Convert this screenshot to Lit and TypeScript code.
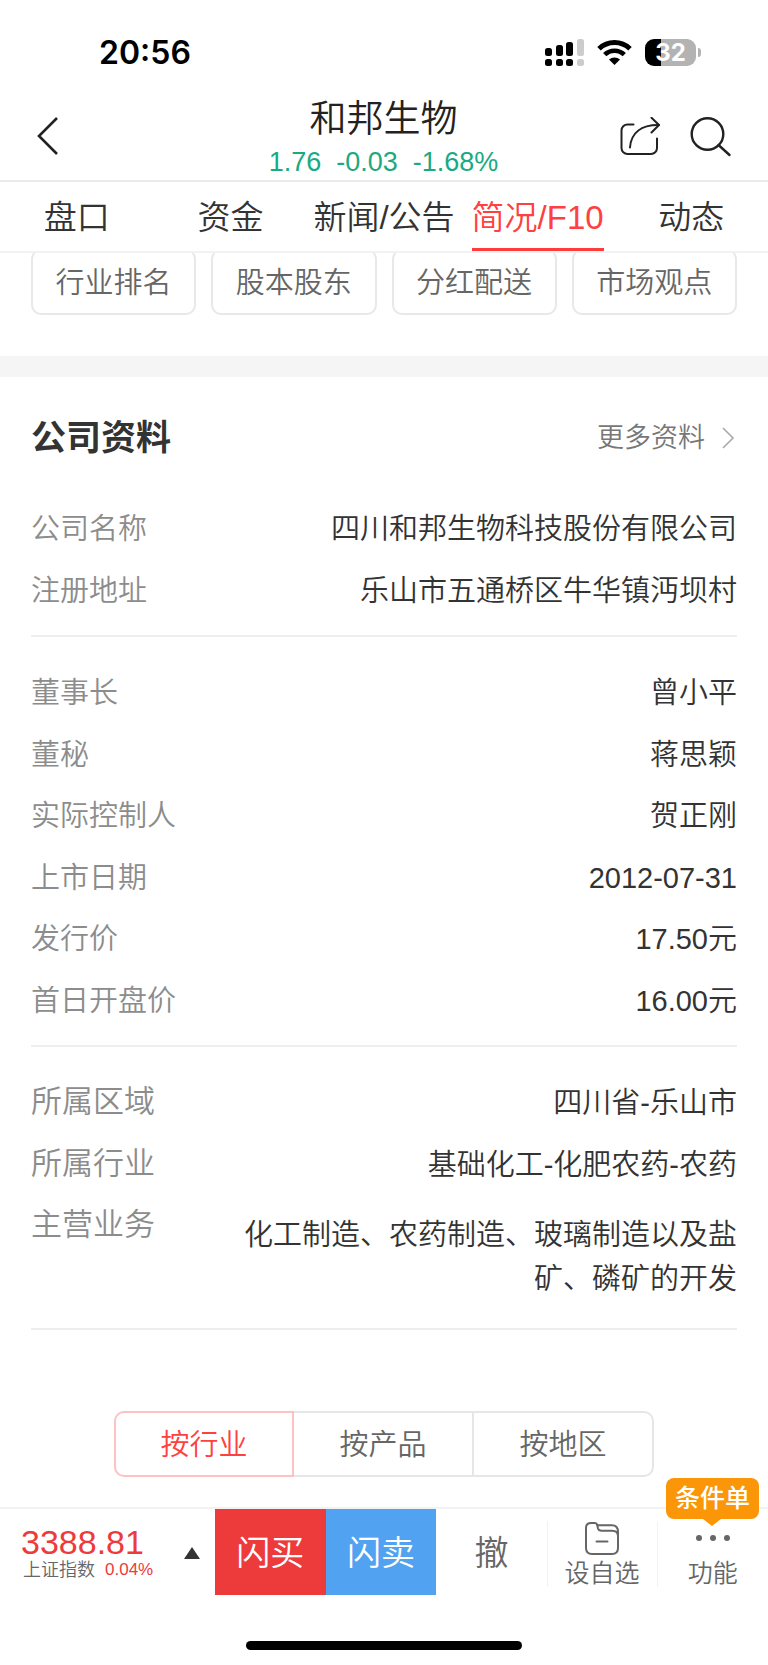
import { LitElement, html, css, svg } from "lit";
import { customElement, state } from "lit/decorators.js";
import { classMap } from "lit/directives/class-map.js";

interface Fact {
  label: string;
  value: string;
  long?: boolean;
}

interface FactGroup {
  facts: Fact[];
  large?: boolean;
}

const TABS = ["盘口", "资金", "新闻/公告", "简况/F10", "动态"];
const SHORTCUTS = ["行业排名", "股本股东", "分红配送", "市场观点"];
const BREAKDOWNS = ["按行业", "按产品", "按地区"];

const GROUPS: FactGroup[] = [
  {
    facts: [
      { label: "公司名称", value: "四川和邦生物科技股份有限公司" },
      { label: "注册地址", value: "乐山市五通桥区牛华镇沔坝村" },
    ],
  },
  {
    facts: [
      { label: "董事长", value: "曾小平" },
      { label: "董秘", value: "蒋思颖" },
      { label: "实际控制人", value: "贺正刚" },
      { label: "上市日期", value: "2012-07-31" },
      { label: "发行价", value: "17.50元" },
      { label: "首日开盘价", value: "16.00元" },
    ],
  },
  {
    large: true,
    facts: [
      { label: "所属区域", value: "四川省-乐山市" },
      { label: "所属行业", value: "基础化工-化肥农药-农药" },
      { label: "主营业务", value: "化工制造、农药制造、玻璃制造以及盐矿、磷矿的开发", long: true },
    ],
  },
];

const resets = css`
  :host {
    display: block;
  }
  * {
    box-sizing: border-box;
  }
  button {
    margin: 0;
    padding: 0;
    border: 0;
    background: none;
    color: inherit;
    font: inherit;
    cursor: pointer;
  }
  a {
    color: inherit;
    text-decoration: none;
  }
  svg {
    display: block;
    fill: none;
  }
`;

@customElement("status-bar")
class StatusBar extends LitElement {
  static styles = [
    resets,
    css`
      .bar {
        display: flex;
        align-items: center;
        justify-content: space-between;
        height: 94px;
        padding: 11px 67px 0 99px;
        color: #000;
        font-family: Inter, "Liberation Sans", sans-serif;
      }
      .time {
        font-size: 32px;
        font-weight: 600;
        line-height: 40px;
      }
      .signals {
        display: flex;
        align-items: center;
        gap: 13px;
      }
      .battery {
        display: flex;
        align-items: center;
        gap: 2px;
      }
      .cell {
        width: 51px;
        border-radius: 9px;
        background: linear-gradient(to right, #000 16px, #b3b3b3 16px);
        color: #fff;
        font-size: 24px;
        font-weight: 700;
        line-height: 27px;
        text-align: center;
      }
      .nub {
        width: 3px;
        height: 9px;
        border-radius: 0 4px 4px 0;
        background: #b3b3b3;
      }
    `,
  ];

  render() {
    const bars = [
      { x: 0, y: 9, on: true },
      { x: 11, y: 6, on: true },
      { x: 21, y: 3, on: true },
      { x: 32, y: 0, on: false },
    ];
    return html`
      <div class="bar">
        <div class="time">20:56</div>
        <div class="signals">
          <svg width="39" height="27" viewBox="0 0 39 27" aria-hidden="true">
            ${bars.map(
              (b) => svg`
                <rect x=${b.x} y=${b.y} width="7" height=${17 - b.y} rx="2.5" fill=${b.on ? "#000" : "#ccc"} />
                <rect x=${b.x} y="20" width="7" height="7" rx="2.5" fill=${b.on ? "#000" : "#ccc"} />`,
            )}
          </svg>
          <svg width="35" height="26" viewBox="0 0 35 26" aria-hidden="true">
            <path d="M2 8.7A22.5 22.5 0 0 1 33 8.7" stroke="#000" stroke-width="5" />
            <path d="M7.7 14.7A14 14 0 0 1 27.3 14.7" stroke="#000" stroke-width="4.6" />
            <path d="M17.5 25L12 19.6A8 8 0 0 1 23 19.6Z" fill="#000" />
          </svg>
          <div class="battery">
            <div class="cell">32</div>
            <div class="nub"></div>
          </div>
        </div>
      </div>
    `;
  }
}

@customElement("stock-header")
class StockHeader extends LitElement {
  static styles = [
    resets,
    css`
      .header {
        display: grid;
        grid-template-columns: 1fr auto 1fr;
        align-items: center;
        padding: 0 36px 0 35px;
        border-bottom: 2px solid #ebebeb;
      }
      .title {
        margin: 0;
        color: #222;
        font-size: 37px;
        font-weight: 350;
        line-height: 51px;
        text-align: center;
      }
      .quote {
        display: flex;
        justify-content: center;
        gap: 15px;
        color: #1aaa82;
        font-size: 27px;
        line-height: 35px;
      }
      .back {
        justify-self: start;
      }
      .actions {
        display: flex;
        justify-content: flex-end;
        gap: 28px;
      }
    `,
  ];

  render() {
    return html`
      <header class="header">
        <button class="back" aria-label="返回">
          <svg width="26" height="40" viewBox="0 0 26 40" stroke="#222" stroke-width="2.6">
            <path d="M22 1L4 19L22 37" />
          </svg>
        </button>
        <div>
          <h1 class="title">和邦生物</h1>
          <div class="quote"><span>1.76</span><span>-0.03</span><span>-1.68%</span></div>
        </div>
        <div class="actions">
          <button aria-label="分享">
            <svg width="42" height="40" viewBox="0 0 42 40" stroke="#222" stroke-width="2" stroke-linecap="round" stroke-linejoin="round">
              <path d="M13.500 7.500H7.500A6 6 0 0 0 1.500 13.500V31A6 6 0 0 0 7.500 37H31A6 6 0 0 0 37 31V21.500" />
              <path d="M10 30.500C11 16 21 7.800 39 8" />
              <path d="M31.500 0.800L39 8L31.500 15.500" />
            </svg>
          </button>
          <button aria-label="搜索">
            <svg width="42" height="40" viewBox="0 0 42 40" stroke="#222" stroke-width="2.4" stroke-linecap="round">
              <circle cx="17.5" cy="17" r="15.800" />
              <path d="M28.500 28L39.500 38" />
            </svg>
          </button>
        </div>
      </header>
    `;
  }
}

@customElement("stock-tabs")
class StockTabs extends LitElement {
  @state() private active = 3;

  static styles = [
    resets,
    css`
      .tabs {
        display: grid;
        grid-template-columns: repeat(5, 1fr);
        justify-items: center;
        border-bottom: 2px solid #f2f2f2;
        background: #fff;
      }
      .tab {
        padding-top: 6px;
        border-bottom: 3px solid transparent;
        color: #333;
        font-size: 33px;
        line-height: 60px;
        white-space: nowrap;
      }
      .tab.active {
        border-color: #ff3b3b;
        color: #ff4040;
      }
    `,
  ];

  render() {
    return html`
      <nav class="tabs">
        ${TABS.map(
          (name, i) => html`
            <button class=${classMap({ tab: true, active: i === this.active })} @click=${() => (this.active = i)}>${name}</button>
          `,
        )}
      </nav>
    `;
  }
}

@customElement("company-profile")
class CompanyProfile extends LitElement {
  @state() private breakdown = 0;

  static styles = [
    resets,
    css`
      .shortcuts {
        display: grid;
        grid-template-columns: repeat(4, 1fr);
        gap: 15px;
        padding: 0 31px 41px;
      }
      .shortcut {
        padding-top: 3px;
        border: 2px solid #e8e8e8;
        border-radius: 10px;
        color: #666;
        font-size: 29px;
        line-height: 59px;
      }
      .band {
        height: 21px;
        background: #f5f5f5;
      }
      .profile {
        padding: 0 31px 30px;
      }
      .heading {
        display: flex;
        align-items: center;
        justify-content: space-between;
        padding: 35px 0;
      }
      .name {
        margin: 0;
        color: #333;
        font-size: 35px;
        font-weight: 700;
        line-height: 52px;
      }
      .more {
        display: flex;
        align-items: center;
        gap: 16px;
        padding-right: 2px;
        color: #777;
        font-size: 27px;
        line-height: 52px;
      }
      .group {
        margin: 0;
        padding: 26px 0 13px;
        border-bottom: 2px solid #eee;
        font-size: 29px;
        line-height: 1.5;
      }
      .group.first {
        padding-top: 0;
      }
      .fact {
        display: flex;
        align-items: flex-start;
        justify-content: space-between;
        gap: 60px;
        padding: 9px 0;
      }
      .label {
        flex: none;
        color: #8c8c8c;
      }
      .large .label {
        font-size: 31px;
        line-height: 1.3;
      }
      .value {
        margin: 0;
        color: #333;
        text-align: right;
      }
      .value.long {
        padding: 9px 0 5px;
      }
      .segments {
        display: grid;
        grid-template-columns: repeat(3, 1fr);
        max-width: 540px;
        margin: 81px auto 0;
      }
      .segment {
        margin-left: -2px;
        padding-top: 3px;
        border: 2px solid #e6e6e6;
        color: #666;
        font-size: 29px;
        line-height: 59px;
      }
      .segment:first-child {
        margin-left: 0;
        border-radius: 10px 0 0 10px;
      }
      .segment:last-child {
        border-radius: 0 10px 10px 0;
      }
      .segment.active {
        z-index: 1;
        border-color: #ffc2c2;
        color: #ff4040;
      }
    `,
  ];

  render() {
    return html`
      <div class="shortcuts">${SHORTCUTS.map((name) => html`<button class="shortcut">${name}</button>`)}</div>
      <div class="band"></div>
      <section class="profile">
        <div class="heading">
          <h2 class="name">公司资料</h2>
          <a class="more" href="#more">
            更多资料
            <svg width="14" height="22" viewBox="0 0 14 22" stroke="#aaa" stroke-width="1.6" aria-hidden="true">
              <path d="M2 1L12 11L2 21" />
            </svg>
          </a>
        </div>
        ${GROUPS.map(
          (group, i) => html`
            <dl class=${classMap({ group: true, first: i === 0, large: !!group.large })}>
              ${group.facts.map(
                (fact) => html`
                  <div class="fact">
                    <dt class="label">${fact.label}</dt>
                    <dd class=${classMap({ value: true, long: !!fact.long })}>${fact.value}</dd>
                  </div>
                `,
              )}
            </dl>
          `,
        )}
        <div class="segments">
          ${BREAKDOWNS.map(
            (name, i) => html`
              <button
                class=${classMap({ segment: true, active: i === this.breakdown })}
                aria-pressed=${i === this.breakdown}
                @click=${() => (this.breakdown = i)}
              >${name}</button>
            `,
          )}
        </div>
      </section>
    `;
  }
}

@customElement("trade-bar")
class TradeBar extends LitElement {
  static styles = [
    resets,
    css`
      .bar {
        display: grid;
        grid-template-columns: 28fr repeat(5, 14.4fr);
        height: 88px;
        border-top: 2px solid #f2f2f2;
        color: #666;
      }
      .index {
        display: flex;
        align-items: center;
        justify-content: space-between;
        padding: 2px 15px 0 21px;
        text-align: left;
      }
      .summary {
        display: grid;
      }
      .points {
        color: #ed3a3b;
        font-size: 34px;
        line-height: 34px;
      }
      .detail {
        display: flex;
        align-items: center;
        gap: 10px;
        padding-left: 2px;
        color: #666;
        font-size: 18px;
        line-height: 22px;
      }
      .change {
        color: #ed3a3b;
        font-size: 17px;
      }
      .trade {
        padding-bottom: 3px;
        font-size: 34px;
      }
      .buy {
        background: #ed3a3b;
        color: #fff;
      }
      .sell {
        background: #51a3f1;
        color: #fff;
      }
      .tool {
        position: relative;
        display: flex;
        flex-direction: column;
        align-items: center;
        padding-top: 12px;
        font-size: 25px;
        line-height: 36px;
      }
      .tool::before {
        content: "";
        position: absolute;
        left: 0;
        top: 12px;
        bottom: 8px;
        border-left: 1px solid #f2f2f2;
      }
      .icon {
        display: grid;
        place-items: center;
        height: 34px;
      }
      .tip {
        position: absolute;
        right: 9px;
        bottom: 76px;
        padding: 0 9px;
        border-radius: 8px;
        background: #fb9608;
        color: #fff;
        font-size: 25px;
        font-weight: 500;
        line-height: 41px;
        white-space: nowrap;
      }
      .tip::after {
        content: "";
        position: absolute;
        left: 50%;
        top: 100%;
        margin-left: -9px;
        border: 9px solid transparent;
        border-top: 7px solid #fb9608;
        border-bottom: 0;
      }
      .home {
        width: 36%;
        height: 9px;
        margin: 46px auto 15px;
        border-radius: 5px;
        background: #000;
      }
    `,
  ];

  render() {
    return html`
      <footer>
        <div class="bar">
          <button class="index">
            <span class="summary">
              <span class="points">3388.81</span>
              <span class="detail"><span>上证指数</span><span class="change">0.04%</span></span>
            </span>
            <svg width="16" height="12" viewBox="0 0 16 12" aria-hidden="true"><path d="M8 0L16 12H0Z" fill="#333" /></svg>
          </button>
          <button class="trade buy">闪买</button>
          <button class="trade sell">闪卖</button>
          <button class="trade">撤</button>
          <button class="tool">
            <span class="icon">
              <svg width="34" height="33" viewBox="0 0 34 33" stroke="#666" stroke-width="2" stroke-linecap="round" stroke-linejoin="round">
                <path d="M6 1H9.500C11.300 1 12 1.800 12.300 3.200L13 6.500C13.500 8.300 14.300 8.700 16.500 8.700H27Q33 8.700 33 14V26Q33 32 27 32H7Q1 32 1 26V6Q1 1 6 1Z" />
                <path d="M12.500 3.200H27Q33 3.200 33 10V14" />
                <path d="M11.500 19.500H22.500" />
              </svg>
            </span>
            设自选
          </button>
          <button class="tool">
            <span class="icon">
              <svg width="36" height="8" viewBox="0 0 36 8">
                ${[4, 18, 32].map((x) => svg`<circle cx=${x} cy="4" r="3" fill="#666" />`)}
              </svg>
            </span>
            功能
            <span class="tip">条件单</span>
          </button>
        </div>
        <div class="home"></div>
      </footer>
    `;
  }
}

@customElement("app-root")
class AppRoot extends LitElement {
  static styles = css`
    :host {
      display: flex;
      flex-direction: column;
      min-height: 100vh;
      background: #fff;
      font-family: "Liberation Sans", "Noto Sans CJK SC", sans-serif;
      font-weight: 350;
    }
    .top {
      position: relative;
      z-index: 1;
    }
    /* The scrolled content starts a little way under the tab strip. */
    .content {
      flex: 1;
      margin-top: -4px;
    }
  `;

  render() {
    return html`
      <div class="top">
        <status-bar></status-bar>
        <stock-header></stock-header>
        <stock-tabs></stock-tabs>
      </div>
      <company-profile class="content"></company-profile>
      <trade-bar></trade-bar>
    `;
  }
}
